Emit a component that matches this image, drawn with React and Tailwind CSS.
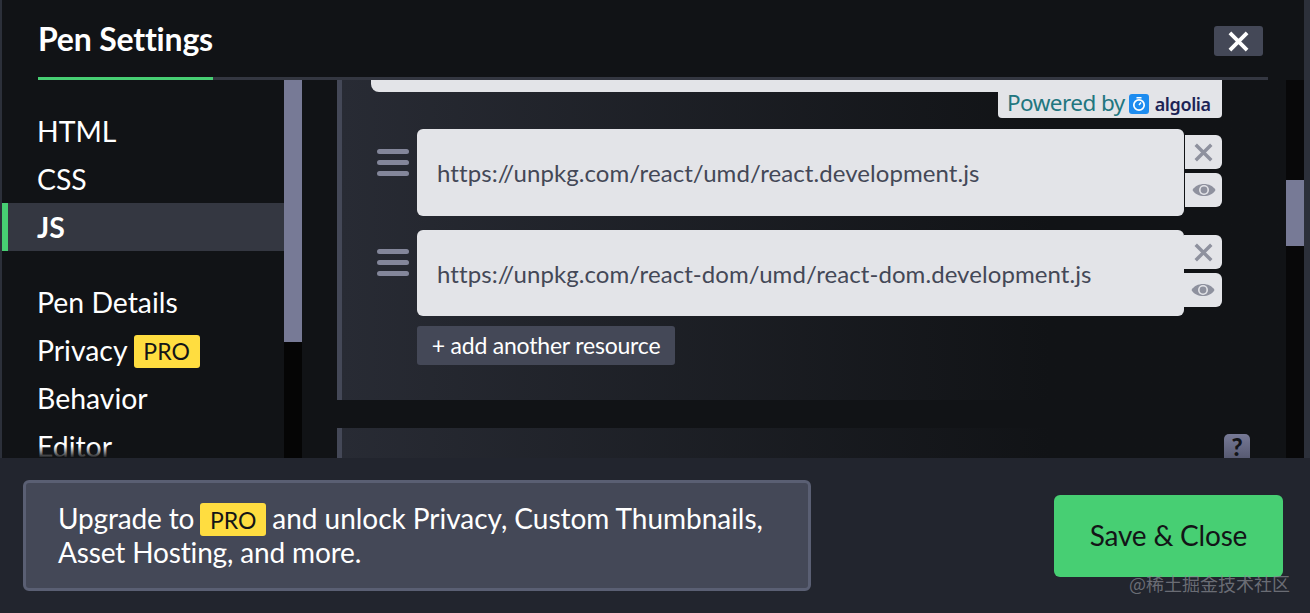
import React from "react";

function Cross({ size = 22, color = "#8e919e", sw = 4 }) {
  return (
    <svg width={size} height={size} viewBox="0 0 22 22" fill="none" stroke={color} strokeWidth={sw}>
      <path d="M2 2 L20 20 M20 2 L2 20" />
    </svg>
  );
}

function Eye() {
  return (
    <svg width="24" height="14" viewBox="0 0 24 14">
      <path d="M0.5 7 C5 -1 19 -1 23.5 7 C19 15 5 15 0.5 7 Z" fill="#8e919e" />
      <circle cx="12" cy="7" r="5" fill="#e3e4e8" />
      <circle cx="12" cy="7" r="3.4" fill="#8e919e" />
    </svg>
  );
}

function Handle() {
  return (
    <div className="w-8 flex flex-col gap-[6px]">
      <div className="h-[5px] rounded-full bg-[#83869a]" />
      <div className="h-[5px] rounded-full bg-[#83869a]" />
      <div className="h-[5px] rounded-full bg-[#83869a]" />
    </div>
  );
}

function Pro({ className = "" }) {
  return (
    <span className={"inline-flex items-center justify-center w-[66px] h-[33px] rounded-[3px] bg-[#ffdd40] text-[#131417] text-[23px] tracking-normal " + className}>
      PRO
    </span>
  );
}

function Row({ url, className, dark }) {
  return (
    <div className={"flex items-start " + className}>
      <div className={"w-[75px] pl-[35px] shrink-0 " + (dark ? "pt-[19px]" : "pt-[20px]")}>
        <Handle />
      </div>
      <div className={"w-[767px] h-full rounded-[6px] bg-[#e3e4e8] flex items-center pl-5 text-[24px] text-[#444857] tracking-[0.07px] " + (dark ? "pt-[2px]" : "")}>
        {url}
      </div>
      <div className={"w-[38px] flex flex-col gap-[4px] " + (dark ? "pt-[5px]" : "pt-[6px] pl-px")}>
        <div className="h-[34px] rounded-r-[6px] bg-[#e3e4e8] flex items-center justify-center">
          <Cross size={19} />
        </div>
        <div className="h-[34px] rounded-r-[6px] bg-[#e3e4e8] flex items-center justify-center">
          <Eye />
        </div>
      </div>
    </div>
  );
}

function NavItem({ children, active, className = "" }) {
  return (
    <div
      className={
        "h-12 flex items-center text-[28.4px] text-white gap-[6px] " +
        (active
          ? "pl-[29px] border-l-[6px] border-[#47cf73] bg-[#343741] font-bold "
          : "pl-[35px] ") +
        className
      }
    >
      {children}
    </div>
  );
}

export default function App() {
  return (
    <div className="relative w-[1310px] h-[613px] overflow-hidden flex flex-col bg-[#111316] font-['Lato',sans-serif] text-white">
      <div className="flex flex-col flex-1 min-h-0 border-l-2 border-r-[6px] border-[#2c303a]">
        {/* Header */}
        <div className="h-20 shrink-0 flex items-start pl-9 pr-[36px]">
          <div className="flex-1 h-20 flex flex-col border-b-[3px] border-[#343741]">
            <div className="flex items-start justify-between flex-1">
              <div className="w-[175px] h-[77px] -mb-[3px] box-content border-b-[3px] border-[#47cf73] flex items-center">
                <h1 className="text-[32px] font-bold leading-none whitespace-nowrap tracking-[-0.2px]">Pen Settings</h1>
              </div>
              <button className="mt-[26px] mr-[5px] w-[49px] h-[30px] rounded-[3px] bg-[#444857] flex items-center justify-center">
                <Cross size={21} color="#ffffff" sw={4} />
              </button>
            </div>
          </div>
        </div>

        {/* Body */}
        <div className="flex flex-1 min-h-0">
          {/* Sidebar */}
          <div className="relative w-[282px] shrink-0 pt-[27px] overflow-hidden">
            <NavItem>HTML</NavItem>
            <NavItem>CSS</NavItem>
            <NavItem active>JS</NavItem>
            <NavItem className="mt-[27px]">Pen Details</NavItem>
            <NavItem>Privacy<Pro className="translate-y-px" /></NavItem>
            <NavItem>Behavior</NavItem>
            <NavItem>Editor</NavItem>
            <div className="absolute left-0 right-0 bottom-0 h-3 bg-gradient-to-b from-transparent to-[#111316]" />
          </div>
          {/* Sidebar scrollbar */}
          <div className="w-[18px] shrink-0 bg-[#050505]">
            <div className="h-[262px] bg-[#777a96]" />
          </div>

          {/* Main */}
          <div className="flex-1 min-w-0 pl-[35px] overflow-hidden">
            <div className="h-[320px] w-[947px] border-l-[5px] border-[#444857] bg-gradient-to-r from-[#282b34] to-[#111316] to-[75%]">
              <div className="ml-[29px] w-[851px] h-3 bg-[#e3e4e8] rounded-bl-[8px]" />
              <div className="ml-[656px] w-[224px] h-[26px] bg-[#e3e4e8] rounded-b-[4px] flex items-center pl-[9px] gap-[4px]">
                <span className="text-[22.5px] leading-none text-[#21767f] font-['Noto_Sans',sans-serif] whitespace-nowrap tracking-[-0.55px] -mt-[4px]">Powered by</span>
                <svg width="20" height="20" viewBox="0 0 20 20" className="shrink-0 -mt-[2px]">
                  <rect width="20" height="20" rx="3" fill="#1d8cf0" />
                  <circle cx="10" cy="11" r="5.2" fill="none" stroke="#fff" strokeWidth="1.7" />
                  <path d="M10 11 L12 8.5 M7.5 3.8 H12.5" stroke="#fff" strokeWidth="1.5" fill="none" />
                </svg>
                <span className="ml-[2px] text-[18px] leading-none font-semibold text-[#1c2355] font-['Noto_Sans',sans-serif] tracking-[-0.4px] -mt-[3px]">algolia</span>
              </div>
              <Row className="mt-[11px] h-[87px]" url="https://unpkg.com/react/umd/react.development.js" />
              <Row className="mt-[14px] h-[86px]" dark url="https://unpkg.com/react-dom/umd/react-dom.development.js" />
              <button className="ml-[75px] mt-[10px] w-[258px] h-[39px] rounded-[3px] bg-[#444857] text-[23px] text-white flex items-center justify-center whitespace-nowrap tracking-[-0.2px]">
                + add another resource
              </button>
            </div>
            <div className="mt-7 w-[947px] h-[30px] border-l-[5px] border-[#444857] bg-gradient-to-r from-[#282b34] to-[#111316] to-[75%] flex justify-end pr-[34px] pt-[6px] overflow-hidden">
              <div className="w-[26px] h-[30px] rounded-[5px] bg-gradient-to-b from-[#777a96] to-[#50536a] flex items-start justify-center text-[#131417] font-black text-[24px] leading-[26px] shrink-0">
                ?
              </div>
            </div>
          </div>

          {/* Main scrollbar */}
          <div className="w-[18px] shrink-0 bg-[#080809] pt-[100px]">
            <div className="h-[66px] bg-[#777a96]" />
          </div>
        </div>
      </div>

      {/* Footer */}
      <div className="h-[155px] shrink-0 bg-[#22252e] flex items-start pl-[23px] pr-[27px] pt-[22px] justify-between">
        <div className="w-[788px] h-[111px] rounded-[6px] border-[3px] border-[#5a5f73] bg-[#444857] pl-[32px] pb-[2px] flex flex-col justify-center text-[28px] leading-[34px] tracking-[-0.15px]">
          <div className="flex items-center gap-[6px] whitespace-nowrap">
            <span>Upgrade to</span>
            <Pro className="translate-y-[2px]" />
            <span className="tracking-[-0.03px]">and unlock Privacy, Custom Thumbnails,</span>
          </div>
          <div>Asset Hosting, and more.</div>
        </div>
        <button className="mt-[15px] w-[229px] h-[82px] rounded-[6px] bg-[#47cf73] text-[#131417] text-[28px] tracking-[-0.2px] flex items-center justify-center pb-[2px]">
          Save &amp; Close
        </button>
      </div>

      {/* Watermark */}
      <div className="absolute left-[1129px] top-[572px] text-[18px] leading-[22px] text-[#8b8d95]/70 font-['Noto_Sans_CJK_SC',sans-serif] whitespace-nowrap">
        @稀土掘金技术社区
      </div>
    </div>
  );
}
